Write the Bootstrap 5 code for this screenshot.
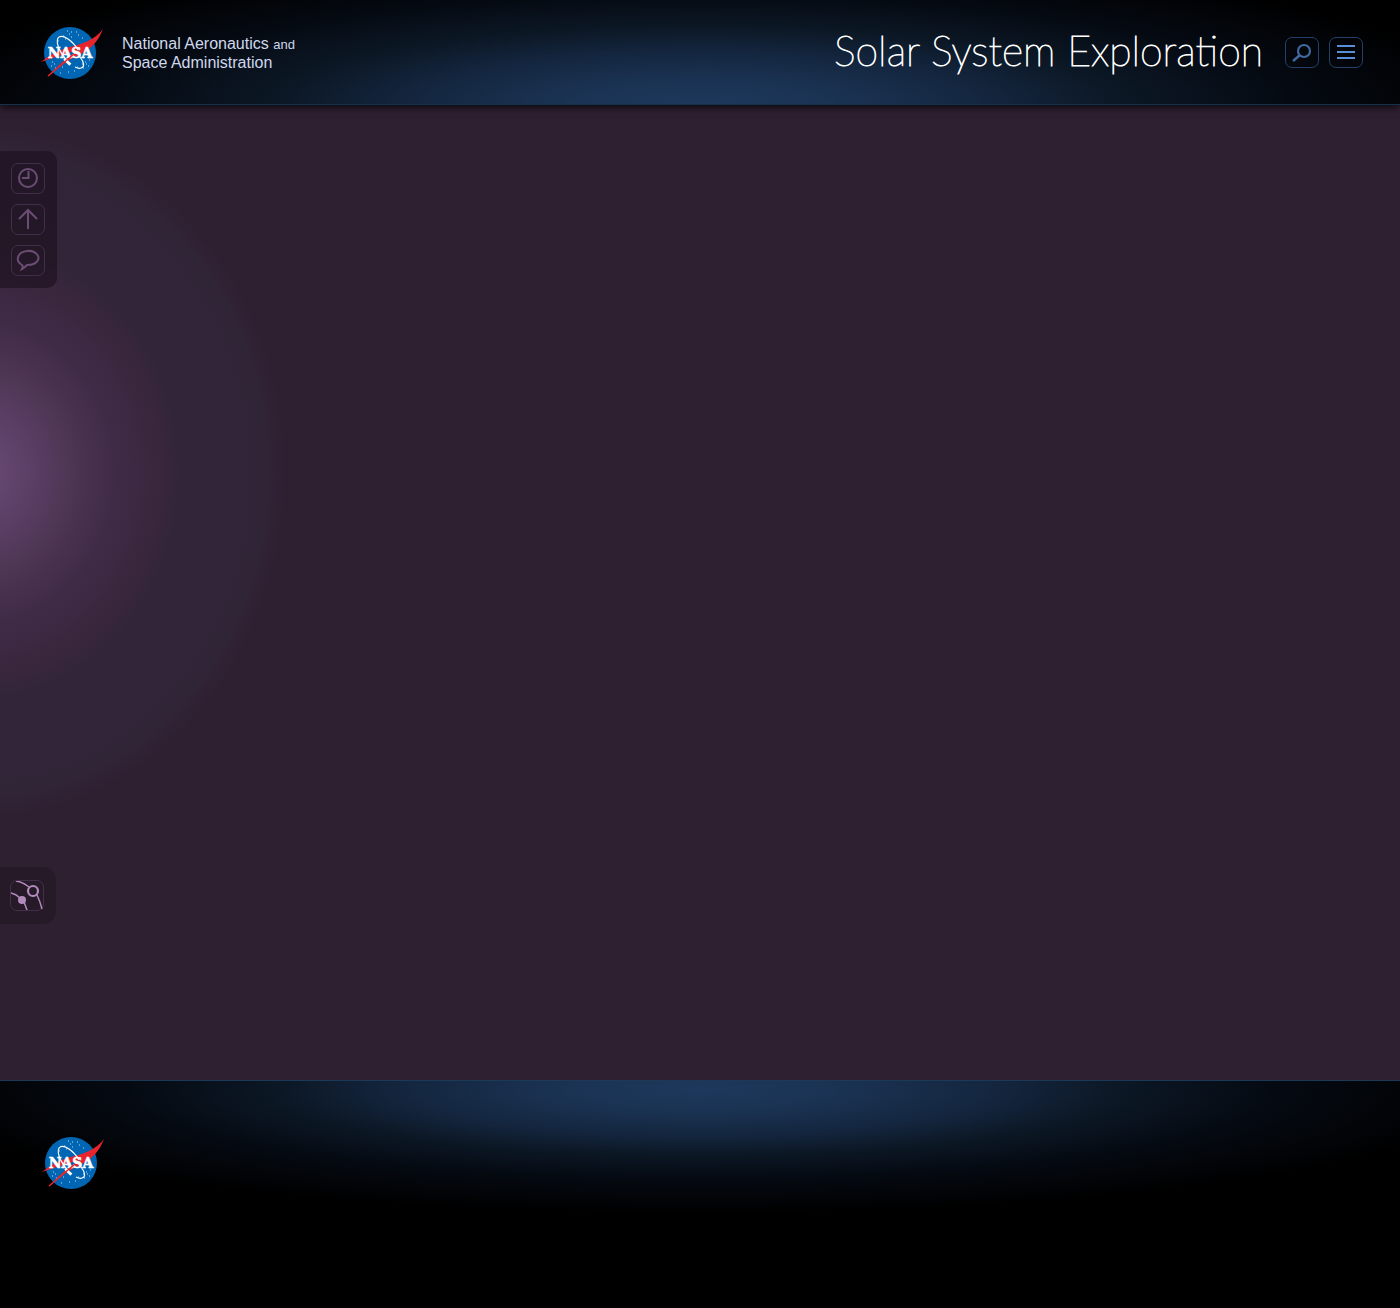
<!DOCTYPE html>
<html lang="en">
<head>
<meta charset="utf-8">
<meta name="viewport" content="width=device-width, initial-scale=1">
<title>Solar System Exploration</title>
<link href="https://cdn.jsdelivr.net/npm/bootstrap@5.3.0/dist/css/bootstrap.min.css" rel="stylesheet">
<style>
  body { background: #000; font-family: "Liberation Sans", Arial, sans-serif; }
  .site-header {
    min-height: 105px; padding: 1px 37px 0 40px;
    border-bottom: 1px solid #14304a;
    background: radial-gradient(ellipse 57% 150px at 50% 106px, #1d385c 0%, #1b3455 15%, #14263f 36%, #0c1826 52%, #050a12 74%, #000 100%) #000;
    box-shadow: 0 2px 8px rgba(0,0,0,.8);
  }
  .brand { padding-top: 1px; gap: 18px; }
  .agency-name { color: #cfd8ee; font-size: 16px; line-height: 18px; }
  .agency-name span { font-size: 13px; }
  .site-title { color: #fff; font-family: Lato, "Open Sans", sans-serif; font-weight: 200; font-size: 41px; line-height: 48px; padding-bottom: 4px; margin-right: 22px; -webkit-text-stroke: 1px #fff; }
  .tool-row { gap: 10px; }
  .tool-btn { width: 34px; height: 31px; border: 1px solid #24406a; border-radius: 7px; background: transparent; }
  .tool-btn svg { display: block; }
  .stage {
    padding: 46px 0 156px;
    background: radial-gradient(ellipse 305px 345px at -20px 367px, #65466f 0%, #64466e 7%, #5a3e64 18%, #4f3756 28%, #48314e 35%, #402b47 44%, #38263c 60%, #322539 66%, #302437 94%, #2f2031 100%) #2f2031;
  }
  .dock { background: rgba(27,16,29,.62); }
  .dock-tools { padding: 12px 12px 12px 11px; border-radius: 0 10px 10px 0; }
  .dock-orbit { padding: 13px 12px 13px 10px; border-radius: 0 13px 13px 0; background: rgba(27,16,29,.42); }
  .dock .tool-btn { border-color: #432e4a; }
  .site-footer {
    min-height: 228px; padding: 55px 41px 0;
    border-top: 1px solid #1c3a58;
    background: radial-gradient(ellipse 57% 124px at 50% 8px, #1d385c 0%, #1b3455 15%, #14263f 37%, #0c1826 52%, #050a12 72%, #000 100%) #000;
  }
  .insignia text { font: bold 14px "DejaVu Serif", serif; fill: #fff; stroke: #fff; stroke-width: .5px; text-anchor: middle; }
</style>
</head>
<body class="d-flex flex-column min-vh-100">
<header class="site-header d-flex align-items-center justify-content-between position-relative">
  <a href="#" class="brand d-flex align-items-center text-decoration-none">
    <svg class="insignia" width="64" height="54" viewBox="0 0 64 54" role="img" aria-label="NASA">
      <circle cx="30" cy="27" r="26" fill="#0066b3"/>
      <path d="M23 10h1M27 5h1M31 6h1M38 9h1M18 15h1M42 12h1M31 11h1M25 13h1M29 8h1M36 6h1M12 36h1M11 40h1M15 42h1M22 41h1M20 47h1M28 46h1M37 41h1M45 36h1M48 40h1M43 42h1M49 34h1M46 38h1M42 38h1M14 38h1M34 45h1" stroke="#bcdcf4" stroke-width="1"/>
      <path d="M63 3C58 16 51 23 39 29 28 34 17 42 8 51c9-11 18-19 32-27C26 27 14 32 1 36c9-7 16-11 25-14C42 18 55 14 63 3Z" fill="#e8242c"/>
      <path d="M31 38C22 31 15 18 18 12c4-5 15 3 20 12M40 31c4 5 5 10 1 11-2 1-4 0-6-1" fill="none" stroke="#fff" stroke-width="1.2"/>
      <path d="m24 33 6 6" stroke="#fff" stroke-width="2"/>
      <text x="30" y="32">NASA</text>
      <path d="M8 50 34 28" fill="none" stroke="#e8242c" stroke-width="1.500"/>
    </svg>
    <span class="agency-name">National Aeronautics <span>and</span><br>Space Administration</span>
  </a>
  <div class="d-flex align-items-center">
    <h1 class="site-title mb-0">Solar System Exploration</h1>
    <div class="tool-row d-flex">
      <button type="button" class="tool-btn p-0" aria-label="Search">
        <svg width="32" height="29" fill="none" stroke="#42689f"><circle cx="18" cy="13" r="6" stroke-width="2.200"/><path d="m14 17-7 6" stroke-width="2.500"/></svg>
      </button>
      <button type="button" class="tool-btn p-0" aria-label="Menu">
        <svg width="32" height="29" stroke="#5a8fd6" stroke-width="2"><path d="M7 8h18M7 14h18M7 20h18"/></svg>
      </button>
    </div>
  </div>
</header>

<main class="stage flex-grow-1 d-flex flex-column align-items-start">
  <nav class="dock dock-tools tool-row d-flex flex-column" aria-label="Page tools">
    <button type="button" class="tool-btn p-0" aria-label="History">
      <svg width="32" height="29" fill="none" stroke="#6b4c74" stroke-width="2"><circle cx="16" cy="14" r="9"/><path d="M16.500 7v7H10"/></svg>
    </button>
    <button type="button" class="tool-btn p-0" aria-label="Back to top">
      <svg width="32" height="29" fill="none" stroke="#6b4c74" stroke-width="2"><path d="M16 24V5M7 14l9-9 9 9"/></svg>
    </button>
    <button type="button" class="tool-btn p-0" aria-label="Feedback">
      <svg width="32" height="29" fill="none" stroke="#6b4c74" stroke-width="2"><path d="M10 19C3 15 5 6 15 5c8-1 13 5 11 9-2 4-6 5-11 5-2 2-3 3-5 4 1-2 1-3 0-4Z"/></svg>
    </button>
  </nav>
  <div class="dock dock-orbit mt-auto">
    <button type="button" class="tool-btn p-0 d-block" aria-label="Orbit navigation">
      <svg width="32" height="29" fill="none" stroke="#b28bbd" stroke-width="1.500"><path d="M5 0q7 1 13 6M26 14q3 6 5 14M0 12q5 1 9 5M13 21l3 8"/><circle cx="22" cy="10" r="5" stroke-width="2.200"/><circle cx="11" cy="19" r="4" fill="#b28bbd" stroke="none"/></svg>
    </button>
  </div>
</main>

<footer class="site-footer">
  <a href="#" class="d-inline-block">
    <svg class="insignia d-block" width="64" height="54" viewBox="0 0 64 54" role="img" aria-label="NASA">
      <circle cx="30" cy="27" r="26" fill="#0066b3"/>
      <path d="M23 10h1M27 5h1M31 6h1M38 9h1M18 15h1M42 12h1M31 11h1M25 13h1M29 8h1M36 6h1M12 36h1M11 40h1M15 42h1M22 41h1M20 47h1M28 46h1M37 41h1M45 36h1M48 40h1M43 42h1M49 34h1M46 38h1M42 38h1M14 38h1M34 45h1" stroke="#bcdcf4" stroke-width="1"/>
      <path d="M63 3C58 16 51 23 39 29 28 34 17 42 8 51c9-11 18-19 32-27C26 27 14 32 1 36c9-7 16-11 25-14C42 18 55 14 63 3Z" fill="#e8242c"/>
      <path d="M31 38C22 31 15 18 18 12c4-5 15 3 20 12M40 31c4 5 5 10 1 11-2 1-4 0-6-1" fill="none" stroke="#fff" stroke-width="1.2"/>
      <path d="m24 33 6 6" stroke="#fff" stroke-width="2"/>
      <text x="30" y="32">NASA</text>
      <path d="M8 50 34 28" fill="none" stroke="#e8242c" stroke-width="1.500"/>
    </svg>
  </a>
</footer>
<script src="https://cdn.jsdelivr.net/npm/bootstrap@5.3.0/dist/js/bootstrap.bundle.min.js"></script>
</body>
</html>
